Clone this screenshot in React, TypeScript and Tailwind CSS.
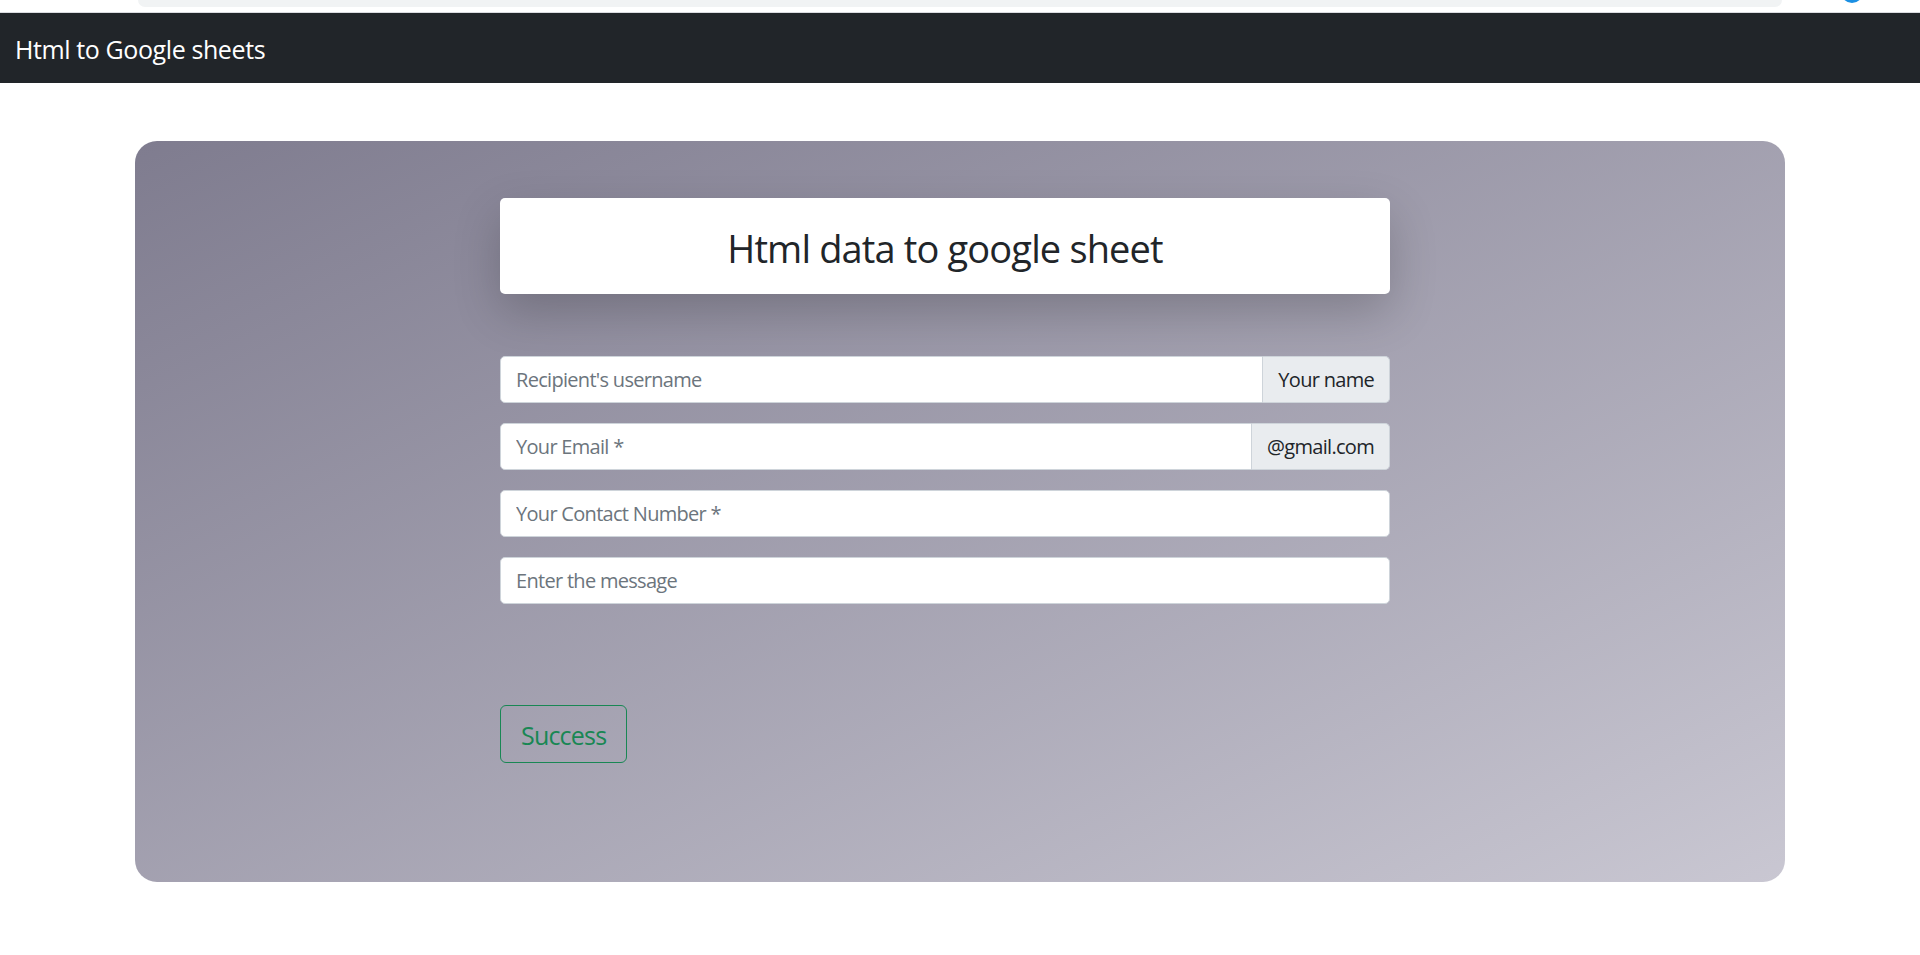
const fields = [
  { placeholder: "Recipient's username", addon: 'Your name' },
  { placeholder: 'Your Email *', addon: '@gmail.com' },
  { placeholder: 'Your Contact Number *' },
  { placeholder: 'Enter the message' },
];

export default function App() {
  return (
    <div className="min-h-[955px] bg-white font-['Open_Sans',sans-serif] text-[#212529]">
      {/* browser chrome leftover */}
      <div className="relative h-[13px] border-b border-[#dadce0] overflow-hidden">
        <div className="ml-[138px] w-[1644px] h-[7px] bg-[#f1f3f4] rounded-b-[9px]" />
        <div className="absolute left-[1841px] top-[-19px] w-[22px] h-[22px] rounded-full bg-[#1a8fe3]" />
      </div>

      {/* Navbar */}
      <nav className="h-[70px] bg-[#212529] flex items-center px-[15px] pt-[2px]">
        <span className="text-white text-[25px] leading-none tracking-[-0.4px]">Html to Google sheets</span>
      </nav>

      {/* Card */}
      <main className="w-[1650px] mx-auto mt-[58px] h-[741px] rounded-[22px] bg-linear-to-br from-[#7f7c8f] to-[#c9c7d2] pt-[57px]">
        <div className="ml-[365px] w-[890px]">
          <div className="h-[96px] bg-white rounded-[5px] flex items-center justify-center pt-[4px] shadow-[0_18px_48px_rgba(0,0,0,0.2)]">
            <h2 className="text-[38px] leading-none tracking-[-0.85px] text-[#212529]">Html data to google sheet</h2>
          </div>

          <form className="mt-[62px] flex flex-col gap-[20px]">
            {fields.map((f, i) => (
              <div key={i} className="flex h-[47px]">
                <input
                  type="text"
                  placeholder={f.placeholder}
                  className={`flex-1 min-w-0 bg-white border border-[#ced4da] px-[15px] text-[20px] tracking-[-0.7px] text-[#212529] placeholder:text-[#6c757d] outline-none ${
                    f.addon ? 'rounded-l-[5px]' : 'rounded-[5px]'
                  }`}
                />
                {f.addon && (
                  <span className="flex items-center px-[15px] bg-[#e9ecef] border border-l-0 border-[#ced4da] rounded-r-[5px] text-[20px] tracking-[-0.7px] text-[#212529] whitespace-nowrap">
                    {f.addon}
                  </span>
                )}
              </div>
            ))}

            <div className="mt-[81px]">
              <button
                type="button"
                className="h-[58px] px-[20px] pt-[3px] border border-[#198754] rounded-[6px] text-[25px] tracking-[-0.8px] text-[#198754] bg-transparent"
              >
                Success
              </button>
            </div>
          </form>
        </div>
      </main>
    </div>
  );
}
